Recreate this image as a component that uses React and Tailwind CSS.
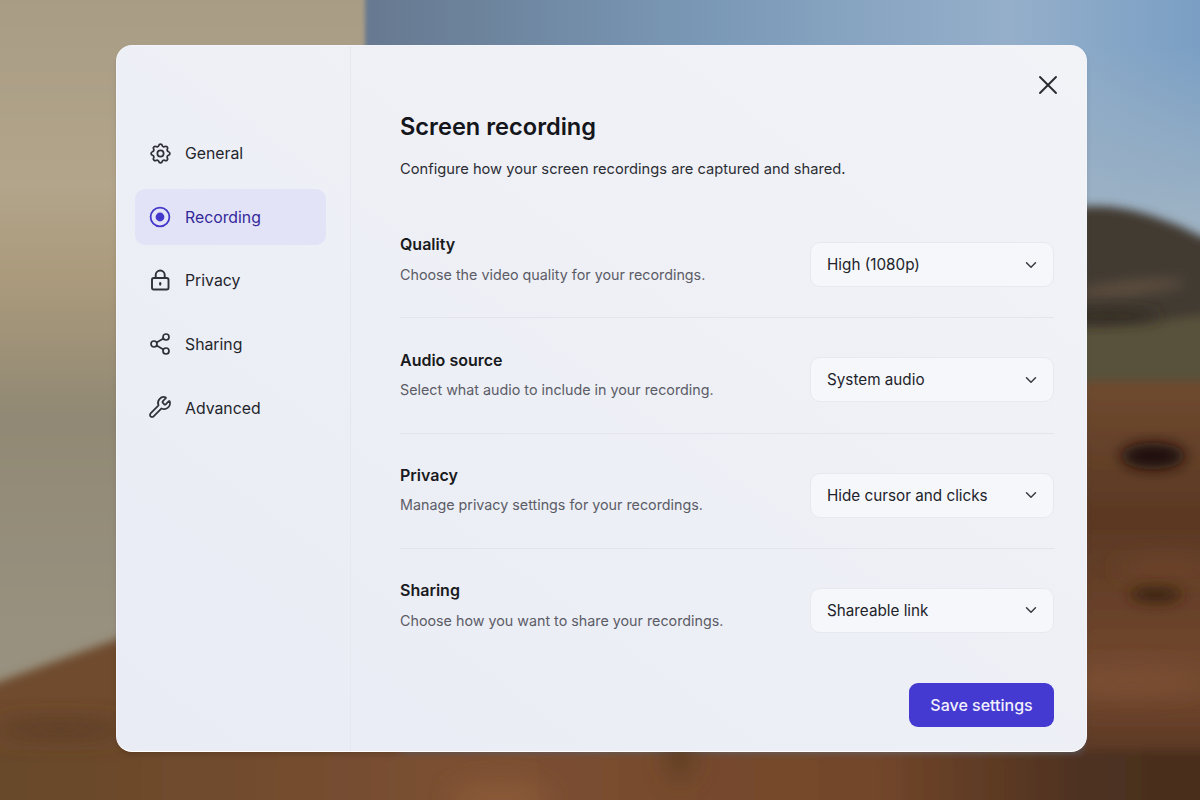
import React from 'react';
import { Share2, Wrench, X, ChevronDown } from 'lucide-react';
import { TbSettings } from 'react-icons/tb';

const navItems = [
  { label: 'General', icon: TbSettings, size: 'w-[25px] h-[25px] -mx-[0.5px]' },
  { label: 'Recording', icon: RecordIcon, size: 'w-[24px] h-[24px]', active: true },
  { label: 'Privacy', icon: LockIcon, size: 'w-[24px] h-[24px]' },
  { label: 'Sharing', icon: Share2, size: 'w-[24px] h-[24px]' },
  { label: 'Advanced', icon: Wrench, size: 'w-[24px] h-[24px]' },
];

const settings = [
  { title: 'Quality', desc: 'Choose the video quality for your recordings.', value: 'High (1080p)' },
  { title: 'Audio source', desc: 'Select what audio to include in your recording.', value: 'System audio' },
  { title: 'Privacy', desc: 'Manage privacy settings for your recordings.', value: 'Hide cursor and clicks' },
  { title: 'Sharing', desc: 'Choose how you want to share your recordings.', value: 'Shareable link' },
];

function RecordIcon({ className }) {
  return (
    <svg viewBox="0 0 24 24" fill="none" className={className}>
      <circle cx="12" cy="12" r="9.4" stroke="currentColor" strokeWidth="1.8" />
      <circle cx="12" cy="12" r="4.4" fill="#4338ca" />
    </svg>
  );
}

function LockIcon({ className }) {
  return (
    <svg viewBox="0 0 24 24" fill="none" stroke="currentColor" strokeWidth="1.9" strokeLinecap="round" strokeLinejoin="round" className={className}>
      <rect x="4" y="10" width="16.5" height="11.5" rx="1.8" />
      <path d="M7.7 10V7a4.5 4.5 0 0 1 9 0v3" />
      <path d="M12.2 15.2v1.4" strokeWidth="2.2" />
    </svg>
  );
}

function Backdrop() {
  return (
    <svg viewBox="0 0 1200 800" preserveAspectRatio="none" className="absolute inset-0 w-full h-full">
      <defs>
        <linearGradient id="sky" x1="0" y1="0" x2="1" y2="0">
          <stop offset="0.3" stopColor="#66788f" />
          <stop offset="0.6" stopColor="#7b9ab8" />
          <stop offset="0.84" stopColor="#95afca" />
          <stop offset="1" stopColor="#7a9fc4" />
        </linearGradient>
        <linearGradient id="skyFade" x1="0" y1="0" x2="0" y2="1">
          <stop offset="0" stopColor="#9db2c4" stopOpacity="0" />
          <stop offset="0.8" stopColor="#9db2c4" />
        </linearGradient>
        <linearGradient id="wall" x1="0" y1="0" x2="0" y2="1">
          <stop offset="0" stopColor="#a79b84" />
          <stop offset="0.28" stopColor="#b2a58b" />
          <stop offset="0.4" stopColor="#ab9a7c" />
          <stop offset="0.58" stopColor="#918974" />
          <stop offset="0.85" stopColor="#98917f" />
          <stop offset="1" stopColor="#98917f" />
        </linearGradient>
        <linearGradient id="ground" x1="0" y1="0" x2="0" y2="1">
          <stop offset="0" stopColor="#6f4a2f" />
          <stop offset="0.3" stopColor="#5a3823" />
          <stop offset="0.68" stopColor="#74492f" />
          <stop offset="0.85" stopColor="#573522" />
          <stop offset="1" stopColor="#452b1e" />
        </linearGradient>
        <linearGradient id="band" x1="0" y1="0" x2="1" y2="0">
          <stop offset="0" stopColor="#664729" />
          <stop offset="0.4" stopColor="#7c5032" />
          <stop offset="0.72" stopColor="#72462a" />
          <stop offset="0.88" stopColor="#4e3220" />
          <stop offset="1" stopColor="#462c1e" />
        </linearGradient>
        <filter id="edge" x="-10%" y="-10%" width="120%" height="120%">
          <feGaussianBlur stdDeviation="2" />
        </filter>
        <filter id="soft" x="-10%" y="-10%" width="120%" height="120%">
          <feGaussianBlur stdDeviation="5" />
        </filter>
        <filter id="blob" x="-50%" y="-150%" width="200%" height="400%">
          <feGaussianBlur stdDeviation="7" />
        </filter>
        <filter id="softer" x="-30%" y="-60%" width="160%" height="220%">
          <feGaussianBlur stdDeviation="12" />
        </filter>
      </defs>
      <rect width="1200" height="800" fill="url(#sky)" />
      <rect x="1080" y="45" width="120" height="215" fill="url(#skyFade)" />
      <g filter="url(#edge)">
        <rect x="-30" y="-30" width="395" height="770" fill="url(#wall)" />
      </g>
      <g filter="url(#soft)">
        <path d="M1080 207 C1115 202 1160 215 1200 236 L1230 245 V330 H1080 Z" fill="#423a30" />
        <path d="M1080 328 C1130 326 1180 318 1230 312 V395 H1080 Z" fill="#59513a" />
        <path d="M1080 382 H1230 V830 H1080 Z" fill="url(#ground)" />
        <path d="M-30 692 C20 675 70 655 130 635 L400 700 V830 H-30 Z" fill="#6f4b2e" />
        <rect x="-30" y="750" width="1260" height="80" fill="url(#band)" />
      </g>
      <ellipse cx="1130" cy="288" rx="55" ry="5" fill="#6a5645" filter="url(#blob)" transform="rotate(-6 1130 288)" />
      <ellipse cx="1110" cy="316" rx="50" ry="6" fill="#332c22" filter="url(#blob)" />
      <ellipse cx="1153" cy="456" rx="32" ry="13" fill="#1f110a" filter="url(#blob)" />
      <ellipse cx="1156" cy="594" rx="26" ry="8" fill="#38220f" filter="url(#blob)" />
      <g filter="url(#softer)">
        <ellipse cx="1165" cy="568" rx="50" ry="5" fill="#7a4c31" />
        <ellipse cx="1130" cy="680" rx="70" ry="10" fill="#7c5036" />
        <ellipse cx="500" cy="800" rx="50" ry="18" fill="#8a5a38" />
        <ellipse cx="680" cy="760" rx="14" ry="20" fill="#5e3c24" />
        <ellipse cx="60" cy="730" rx="70" ry="8" fill="#553921" />
      </g>
    </svg>
  );
}

export default function App() {
  return (
    <div className="relative w-[1200px] h-[800px] overflow-hidden pl-[116px] pt-[45px] font-['Inter',sans-serif]">
      <Backdrop />

      <div className="relative flex w-[971px] h-[707px] rounded-[16px] border border-[#f4f5fa] border-b-white bg-gradient-to-tr from-[#e9ecf5] to-[#f2f3f7] shadow-md overflow-hidden">
        <aside className="w-[234px] shrink-0 border-r border-[#e6e7ef] pl-[18px] pr-[24px] pt-[79px]">
          <nav className="flex flex-col gap-[7.6px]">
            {navItems.map(({ label, icon: Icon, size, active }) => (
              <div
                key={label}
                className={`flex items-center h-14 rounded-[10px] pl-[13px] gap-[13px] text-[15.8px] ${
                  active ? 'bg-[#e2e3f6] text-[#33299b]' : 'text-[#24252c]'
                }`}
              >
                <Icon className={`${size} ${active ? 'text-[#4338ca]' : 'text-[#2f3038]'}`} strokeWidth={1.7} />
                <span className="mt-[2px]">{label}</span>
              </div>
            ))}
          </nav>
        </aside>

        <main className="relative flex-1 pl-[49px] pr-[32px] pt-[62px]">
          <button className="absolute top-[23px] right-[22px] text-[#2a2b31]">
            <X className="w-[32px] h-[32px]" strokeWidth={1.4} />
          </button>

          <h1 className="text-[23.6px] leading-[38px] font-semibold text-[#15161b]">Screen recording</h1>
          <p className="mt-[10px] text-[14.7px] leading-[26px] text-[#2c2d34]">
            Configure how your screen recordings are captured and shared.
          </p>

          <div className="mt-[60px] flex flex-col gap-[39px]">
            {settings.map((row, i) => (
              <div
                key={row.title}
                className={`flex items-center justify-between h-[45px] box-content pb-[30.3px] ${
                  i < settings.length - 1 ? 'border-b border-[#e4e5ec]' : ''
                }`}
              >
                <div className="mb-[10px]">
                  <div className="text-[16px] leading-[24px] font-semibold text-[#191a20]">{row.title}</div>
                  <div className="mt-[6.5px] text-[14.3px] leading-[24px] text-[#5b5c66]">{row.desc}</div>
                </div>
                <div className="flex items-center justify-between w-[244px] h-[45px] rounded-[10px] border border-[#e8e9f0] bg-[#f6f7fa] pl-[16px] pr-[13px] text-[15.25px] text-[#22232a]">
                  <span className="mt-[2px]">{row.value}</span>
                  <ChevronDown className="w-[18px] h-[18px] text-[#3a3b42]" strokeWidth={2} />
                </div>
              </div>
            ))}
          </div>

          <div className="absolute right-[32px] bottom-[24px]">
            <button className="w-[145px] h-[44px] rounded-[9px] bg-[#4439d0] text-[#f1f0fc] text-[16px] font-medium">
              Save settings
            </button>
          </div>
        </main>
      </div>
    </div>
  );
}
